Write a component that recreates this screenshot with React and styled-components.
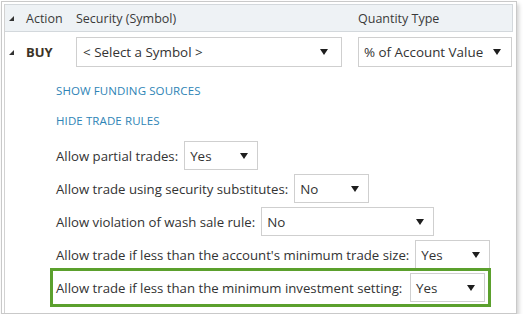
import React from "react";
import styled, { createGlobalStyle } from "styled-components";

const Global = createGlobalStyle`
  html, body { margin: 0; padding: 0; background: #fff; }
  body { font-family: "Open Sans", "Noto Sans", sans-serif; color: #333; }
`;

const Frame = styled.div`
  box-sizing: border-box;
  margin: 1px 0 0 1px;
  width: 516px;
  height: 313px;
  border: 1px solid #c9c9c9;
  box-shadow: 2px 3px 4px rgba(0, 0, 0, 0.18);
  padding: 2px 3px 0 2px;
  background: #fff;
`;

const Inner = styled.div`
  box-sizing: border-box;
  height: 100%;
  border-left: 1px solid #d2d2d2;
`;

const Grid = styled.div`
  display: grid;
  grid-template-columns: 21px 50px 282px 1fr;
  align-items: center;
`;

const HeaderRow = styled(Grid)`
  box-sizing: border-box;
  height: 28px;
  background: #eef2f5;
  border: 1px solid #d3d8dc;
  border-left: none;
  font-size: 12.5px;
  color: #3a3a3a;
`;

const BuyRow = styled(Grid)`
  padding-top: 5px;
`;

const Caret = styled.svg`
  width: 5px;
  height: 5px;
  margin-left: 4px;
  margin-top: 1px;
`;

const BuyLabel = styled.div`
  font-weight: 700;
  font-size: 13px;
  color: #3b3326;
`;

const Select = styled.div`
  box-sizing: border-box;
  display: flex;
  align-items: center;
  justify-content: space-between;
  width: ${(p) => p.$w}px;
  height: ${(p) => p.$h || 29}px;
  border: 1px solid #cfcfcf;
  background: #fff;
  padding: 0 ${(p) => p.$pr || 9}px 0 ${(p) => p.$pl || 5}px;
  font-size: 13.4px;
  color: #333;
  white-space: nowrap;
  flex: none;
`;

const Arrow = () => (
  <svg width="8" height="6" viewBox="0 0 8 6">
    <polygon points="0,0 8,0 4,6" fill="#1e1e1e" />
  </svg>
);

const Body = styled.div`
  padding-left: 51px;
`;

const LinkText = styled.div`
  font-size: 11.5px;
  line-height: 20px;
  color: #2e84b6;
  letter-spacing: 0.1px;
  margin-top: ${(p) => p.$mt}px;
`;

const Rules = styled.div`
  display: flex;
  flex-direction: column;
  gap: 4px;
  margin-top: 10px;
`;

const RuleRow = styled.div`
  display: flex;
  align-items: center;
  gap: 6px;
  height: 29px;
  font-size: 13.2px;
  color: #333;
  white-space: nowrap;
`;

const Highlight = styled(RuleRow)`
  height: auto;
  width: 441px;
  box-sizing: border-box;
  margin: -5px 0 0 -6px;
  border: 3px solid #5ba02d;
  padding: 2px 3px 2px 3px;
  justify-content: space-between;
`;

const rules = [
  { label: "Allow partial trades:", value: "Yes", w: 74 },
  { label: "Allow trade using security substitutes:", value: "No", w: 75 },
  { label: "Allow violation of wash sale rule:", value: "No", w: 173 },
  { label: "Allow trade if less than the account's minimum trade size:", value: "Yes", w: 75 },
];

export default function App() {
  return (
    <>
      <Global />
      <Frame>
        <Inner>
          <HeaderRow>
            <Caret viewBox="0 0 5 5"><polygon points="5,0 5,5 0,5" fill="#333" /></Caret>
            <div>Action</div>
            <div>Security (Symbol)</div>
            <div>Quantity Type</div>
          </HeaderRow>
          <BuyRow>
            <Caret viewBox="0 0 5 5"><polygon points="5,0 5,5 0,5" fill="#333" /></Caret>
            <BuyLabel>BUY</BuyLabel>
            <Select $w={266} $h={30} $pl={6} $pr={13}>
              <span>&lt; Select a Symbol &gt;</span>
              <Arrow />
            </Select>
            <Select $w={154} $h={30} $pl={5} $pr={10}>
              <span>% of Account Value</span>
              <Arrow />
            </Select>
          </BuyRow>
          <Body>
            <LinkText $mt={14}>SHOW FUNDING SOURCES</LinkText>
            <LinkText $mt={10}>HIDE TRADE RULES</LinkText>
            <Rules>
              {rules.map((r) => (
                <RuleRow key={r.label}>
                  <span>{r.label}</span>
                  <Select $w={r.w}>
                    <span>{r.value}</span>
                    <Arrow />
                  </Select>
                </RuleRow>
              ))}
              <Highlight>
                <span>Allow trade if less than the minimum investment setting:</span>
                <Select $w={75}>
                  <span>Yes</span>
                  <Arrow />
                </Select>
              </Highlight>
            </Rules>
          </Body>
        </Inner>
      </Frame>
    </>
  );
}
